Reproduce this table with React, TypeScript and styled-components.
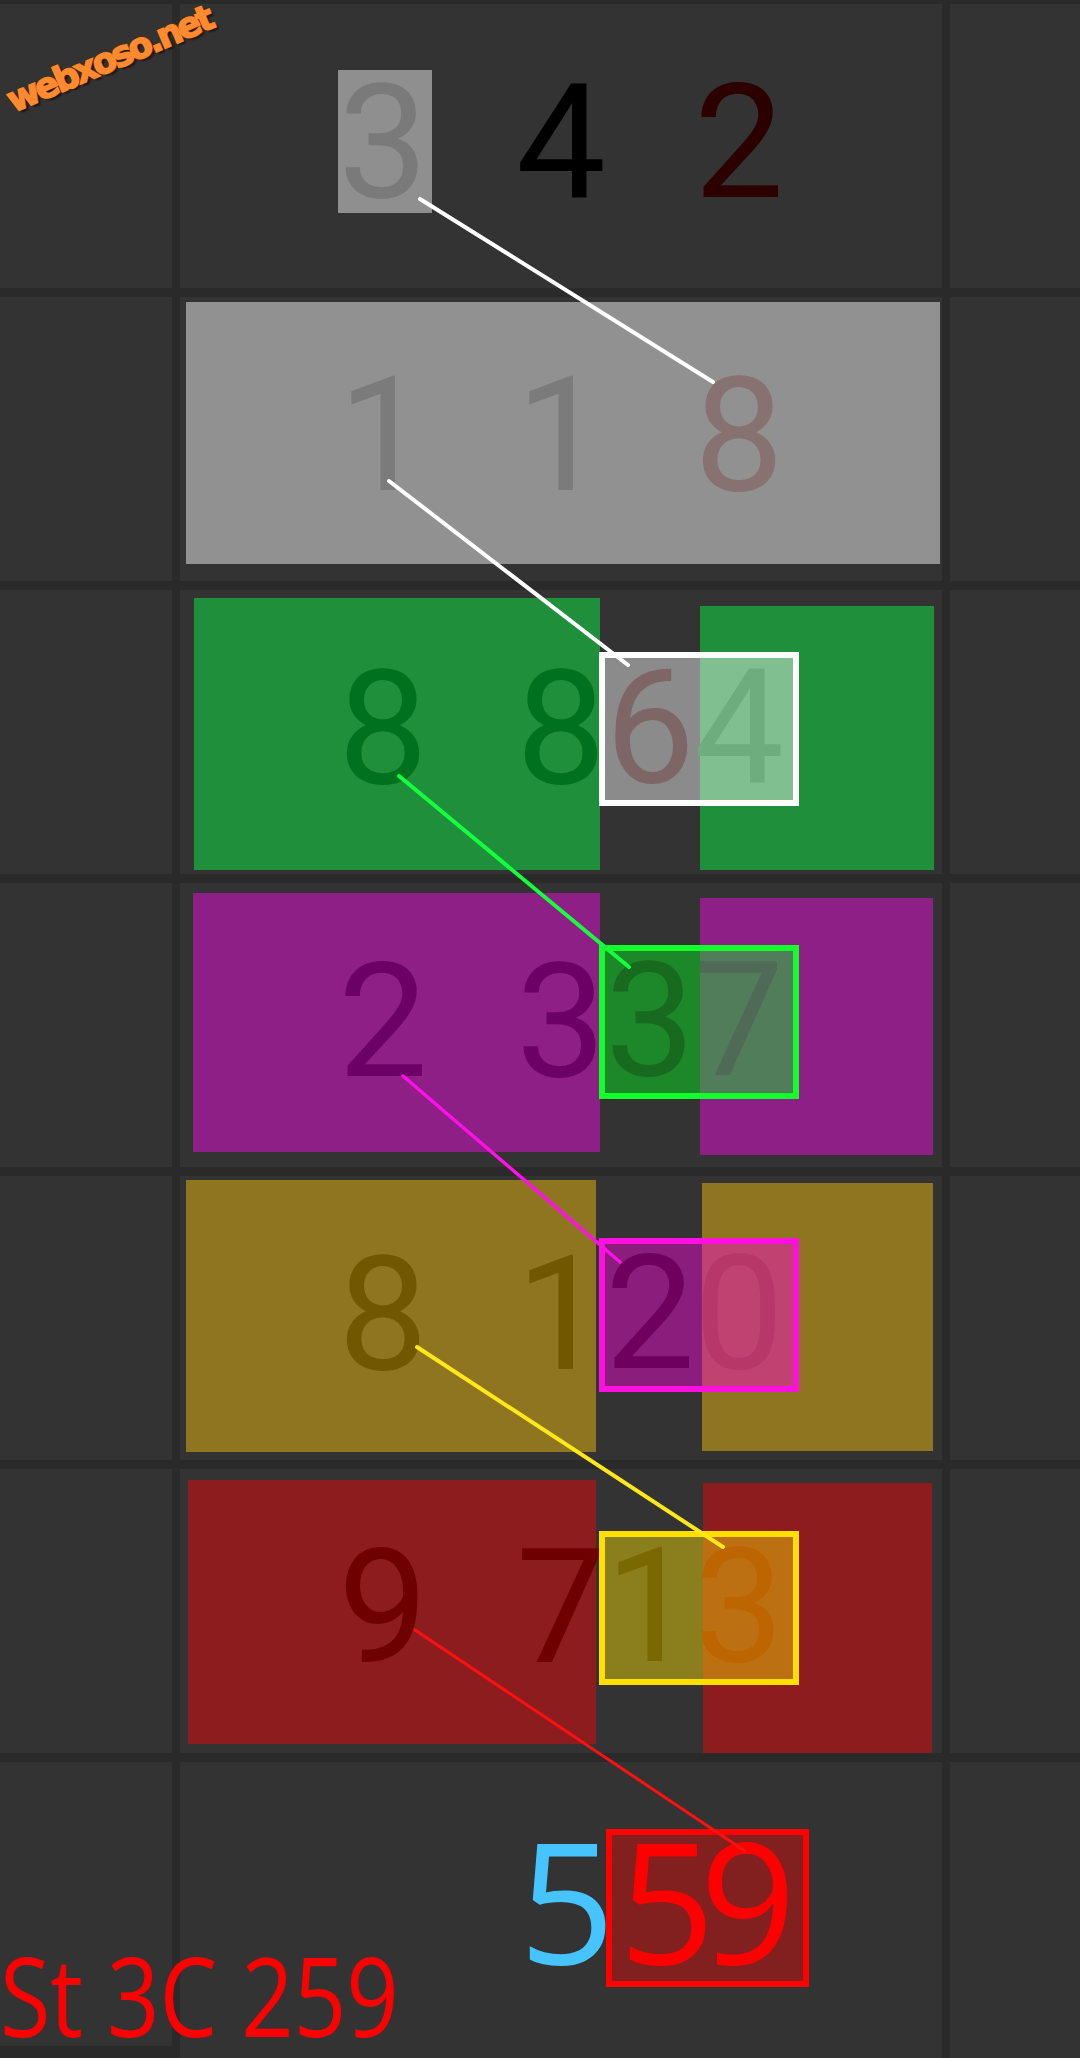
import React from "react";
import styled, { createGlobalStyle } from "styled-components";

type Band = { color: string; x0: number; x1: number; y0: number; y1: number };
type Digit = { d: string; color: string };
type Pair = { border: string; fill: string; digits: Digit[] };
type Row = {
  bands: Band[];
  slots: (Digit | null)[];
  marked?: string;
  pair?: Pair;
};

const GlobalStyle = createGlobalStyle`
  html, body {
    margin: 0;
    padding: 0;
    background: #2a2a2a;
  }
  body {
    width: 1080px;
    height: 2058px;
    overflow: hidden;
  }
`;

const rows: Row[] = [
  {
    bands: [],
    marked: "#8f8f8f",
    slots: [
      { d: "3", color: "#7a7a7a" },
      null,
      { d: "4", color: "#000000" },
      null,
      { d: "2", color: "#2d0000" },
    ],
  },
  {
    bands: [{ color: "#919191", x0: 6, x1: 760, y0: 5, y1: 267 }],
    slots: [
      { d: "1", color: "#7b7b7b" },
      null,
      { d: "1", color: "#7b7b7b" },
      null,
      { d: "8", color: "#877171" },
    ],
  },
  {
    bands: [
      { color: "#1f8f3c", x0: 14, x1: 420, y0: 8, y1: 280 },
      { color: "#1f8f3c", x0: 520, x1: 754, y0: 16, y1: 280 },
    ],
    slots: [{ d: "8", color: "#00711f" }, null, { d: "8", color: "#00711f" }],
    pair: {
      border: "#ffffff",
      fill: "rgba(255,255,255,0.43)",
      digits: [
        { d: "6", color: "#7e6667" },
        { d: "4", color: "#6eae7e" },
      ],
    },
  },
  {
    bands: [
      { color: "#8d1f87", x0: 13, x1: 420, y0: 10, y1: 269 },
      { color: "#8d1f87", x0: 520, x1: 753, y0: 15, y1: 272 },
    ],
    slots: [{ d: "2", color: "#6d0066" }, null, { d: "3", color: "#6d0066" }],
    pair: {
      border: "#12ff2c",
      fill: "rgba(0,255,30,0.42)",
      digits: [
        { d: "3", color: "#176a1e" },
        { d: "7", color: "#4f6a57" },
      ],
    },
  },
  {
    bands: [
      { color: "#8f751f", x0: 6, x1: 416, y0: 4, y1: 276 },
      { color: "#8f751f", x0: 522, x1: 753, y0: 7, y1: 275 },
    ],
    slots: [{ d: "8", color: "#715800" }, null, { d: "1", color: "#715800" }],
    pair: {
      border: "#ff10e0",
      fill: "rgba(255,0,220,0.43)",
      digits: [
        { d: "2", color: "#6f005e" },
        { d: "0", color: "#b83769" },
      ],
    },
  },
  {
    bands: [
      { color: "#8c1c1e", x0: 8, x1: 416, y0: 11, y1: 275 },
      { color: "#8c1c1e", x0: 523, x1: 752, y0: 14, y1: 284 },
    ],
    slots: [{ d: "9", color: "#6e0000" }, null, { d: "7", color: "#6e0000" }],
    pair: {
      border: "#ffe000",
      fill: "rgba(255,225,0,0.43)",
      digits: [
        { d: "1", color: "#7a6800" },
        { d: "3", color: "#bd6500" },
      ],
    },
  },
];

const links = [
  { color: "#ffffff", w: 4, x1: 420, y1: 199, x2: 713, y2: 382 },
  { color: "#ffffff", w: 4, x1: 389, y1: 481, x2: 628, y2: 665 },
  { color: "#14ff3c", w: 4, x1: 399, y1: 776, x2: 629, y2: 967 },
  { color: "#ff10e8", w: 3.5, x1: 403, y1: 1076, x2: 620, y2: 1262 },
  { color: "#ffe81a", w: 4, x1: 417, y1: 1347, x2: 723, y2: 1547 },
  { color: "#ff1010", w: 3, x1: 415, y1: 1630, x2: 745, y2: 1851 },
];

const App: React.FC = () => {
  return (
    <>
      <GlobalStyle />
      <Board>
        {rows.map((row, i) => (
          <React.Fragment key={i}>
            <SideCell />
            <CenterCell>
              <BandLayer>
                {row.bands.map((b, j) => {
                  const prev = j > 0 ? row.bands[j - 1].x1 : 0;
                  return (
                    <BandBox
                      key={j}
                      $color={b.color}
                      $gap={b.x0 - prev}
                      $width={b.x1 - b.x0}
                      $top={b.y0}
                      $height={b.y1 - b.y0}
                    />
                  );
                })}
              </BandLayer>
              <DigitLine>
                {row.slots.map((s, j) =>
                  j === 0 && row.marked ? (
                    <MarkedSlot key={j} $color={s ? s.color : "transparent"} $bg={row.marked}>
                      {s?.d}
                    </MarkedSlot>
                  ) : (
                    <Slot key={j} $color={s ? s.color : "transparent"}>
                      {s?.d}
                    </Slot>
                  )
                )}
                {row.pair && (
                  <PairBox $border={row.pair.border} $fill={row.pair.fill}>
                    {row.pair.digits.map((d, j) => (
                      <Slot key={j} $color={d.color}>
                        {d.d}
                      </Slot>
                    ))}
                  </PairBox>
                )}
              </DigitLine>
            </CenterCell>
            <SideCell />
          </React.Fragment>
        ))}
        <SideCell $short />
        <CenterCell>
          <ResultLine>
            <ResultDigit $color="#45c4ff">5</ResultDigit>
            <ResultBox>
              <ResultDigit $color="#ff0000" $tight>
                59
              </ResultDigit>
            </ResultBox>
          </ResultLine>
        </CenterCell>
        <SideCell />

        <Links viewBox="0 0 1080 2058">
          {links.map((l, i) => (
            <line
              key={i}
              x1={l.x1}
              y1={l.y1}
              x2={l.x2}
              y2={l.y2}
              stroke={l.color}
              strokeWidth={l.w}
              strokeLinecap="round"
            />
          ))}
        </Links>
        <Watermark>webxoso.net</Watermark>
        <Caption>St 3C 259</Caption>
      </Board>
    </>
  );
};

export default App;

const Board = styled.div`
  position: relative;
  width: 1080px;
  height: 2058px;
  box-sizing: border-box;
  padding-top: 4px;
  display: grid;
  grid-template-columns: 172px 762px 130px;
  grid-template-rows: repeat(6, 284px) 296px;
  column-gap: 8px;
  row-gap: 9px;
  background: #2a2a2a;
  overflow: hidden;
`;

const SideCell = styled.div<{ $short?: boolean }>`
  background: #333333;
  height: ${(p) => (p.$short ? "284px" : "auto")};
`;

const CenterCell = styled.div`
  background: #333333;
  display: grid;
  grid-template: 1fr / 1fr;
  overflow: hidden;
  & > * {
    grid-area: 1 / 1;
  }
`;

const BandLayer = styled.div`
  display: flex;
  align-items: flex-start;
`;

const BandBox = styled.div<{
  $color: string;
  $gap: number;
  $width: number;
  $top: number;
  $height: number;
}>`
  flex: none;
  background: ${(p) => p.$color};
  margin-left: ${(p) => p.$gap}px;
  margin-top: ${(p) => p.$top}px;
  width: ${(p) => p.$width}px;
  height: ${(p) => p.$height}px;
`;

const DigitLine = styled.div`
  display: flex;
  align-items: flex-start;
  padding: 69px 0 0 158px;
`;

const Slot = styled.span<{ $color: string }>`
  flex: none;
  width: 89px;
  height: 140px;
  text-align: center;
  font-family: Roboto, "Liberation Sans", sans-serif;
  font-size: 160px;
  line-height: 140px;
  color: ${(p) => p.$color};
`;

const MarkedSlot = styled(Slot)<{ $bg: string }>`
  background: ${(p) => p.$bg};
  margin: -3px -5px 0 0;
  padding: 3px 5px 0 0;
`;

const PairBox = styled.div<{ $border: string; $fill: string }>`
  display: flex;
  margin: -7px 0 0 -6px;
  padding: 0 10px 2px 0;
  border: 6px solid ${(p) => p.$border};
  background: ${(p) => p.$fill};
`;

const ResultLine = styled.div`
  display: flex;
  align-items: flex-start;
  padding: 73px 0 0 339px;
`;

const ResultDigit = styled.span<{ $color: string; $tight?: boolean }>`
  font-family: "Open Sans", "Noto Sans", sans-serif;
  font-size: 168px;
  line-height: 128px;
  color: ${(p) => p.$color};
  letter-spacing: ${(p) => (p.$tight ? "-15px" : "0")};
`;

const ResultBox = styled.div`
  margin: -6px 0 0 -9px;
  padding: 0 22px 13px 7px;
  border: 6px solid #ff0000;
  background: rgba(255, 0, 0, 0.39);
`;

const Links = styled.svg`
  position: absolute;
  inset: 0;
  width: 1080px;
  height: 2058px;
  pointer-events: none;
`;

const Watermark = styled.span`
  position: absolute;
  left: 0;
  top: 44px;
  font-family: "DejaVu Sans", sans-serif;
  font-weight: 700;
  font-size: 35px;
  line-height: 30px;
  letter-spacing: -3px;
  color: #ff8a30;
  -webkit-text-stroke: 1.5px #ff8a30;
  text-shadow: 1px 1px 0 #6a2c00, -1px -1px 0 #7a3a08, 1px -1px 0 #6a2c00,
    -1px 1px 0 #6a2c00, 2px 3px 2px rgba(0, 0, 0, 0.6);
  transform: rotate(-23deg);
  transform-origin: center;
  white-space: nowrap;
`;

const Caption = styled.span`
  position: absolute;
  left: 0;
  top: 1939px;
  font-family: "Open Sans", "Noto Sans", sans-serif;
  font-size: 110px;
  line-height: 110px;
  color: #ff0000;
  transform: scaleX(0.835);
  transform-origin: 0 0;
  white-space: nowrap;
`;
